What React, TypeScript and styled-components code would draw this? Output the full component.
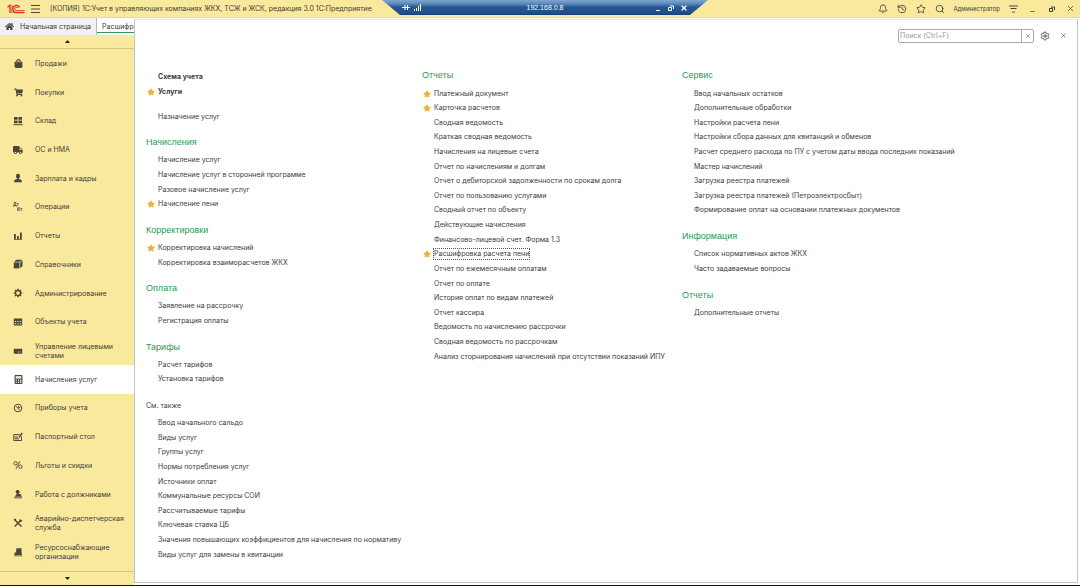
import React from 'react';
import styled, { createGlobalStyle } from 'styled-components';
import { FaShoppingBag, FaShoppingCart, FaTruck, FaHome, FaCalculator, FaStar } from 'react-icons/fa';
import { Bell, History, Star, Search, X, Settings } from 'lucide-react';

const Global = createGlobalStyle`
  * { box-sizing: border-box; }
  html, body, #root { height: 100%; }
  body { margin: 0; background: #fff; color: #3d3d3d; font: 7px/10px Inter, "Liberation Sans", Arial, sans-serif; }
  button, input { font: inherit; color: inherit; }
  button { padding: 0; border: 0; background: none; }
  ul, h2, p { margin: 0; padding: 0; list-style: none; }
  a { color: inherit; text-decoration: none; }
`;

const Shell = styled.div`
  display: flex;
  flex-direction: column;
  min-height: 100vh;
  border-bottom: 1px solid #111;
`;

const TitleBar = styled.header`
  position: relative;
  display: flex;
  align-items: center;
  gap: 6px;
  height: 18px;
  padding: 0 4px 0 7px;
  background: #f9e99c;
  border-bottom: 1px solid #e5d88f;
`;

const AppName = styled.span`
  margin-left: 4px;
  white-space: nowrap;
`;

const BarTools = styled.div`
  display: flex;
  align-items: center;
  gap: 8px;
  margin-left: auto;
  svg { display: block; }
`;

const BarButton = styled.button<{ $small?: boolean }>`
  display: flex;
  align-items: center;
  justify-content: center;
  min-width: 11px;
  height: 12px;
  font-size: ${(p) => (p.$small ? '6px' : '7px')};
`;

const WindowButtons = styled.div`
  display: flex;
  gap: 8px;
`;

const Remote = styled.div`
  position: absolute;
  top: 0;
  left: 50%;
  display: grid;
  grid-template-columns: 1fr auto 1fr;
  align-items: center;
  width: 326px;
  height: 15px;
  padding: 0 20px;
  transform: translateX(-50%);
  margin-left: 5px;
  color: #fff;
  background: linear-gradient(#7fa6cd 0, #5a8abb 25%, #24568f 48%, #215089 85%, #17406f 100%);
  clip-path: polygon(0 0, 100% 0, 308px 100%, 18px 100%);
`;

const Address = styled.span`
  font-family: "Liberation Sans", Arial, sans-serif;
`;

const RemoteGroup = styled.div<{ $end?: boolean }>`
  display: flex;
  align-items: center;
  gap: ${(p) => (p.$end ? '6px' : '4px')};
  justify-content: ${(p) => (p.$end ? 'flex-end' : 'flex-start')};
`;

const Main = styled.div`
  display: grid;
  flex: 1;
  grid-template-columns: 134px 1fr;
`;

const Left = styled.div`
  display: flex;
  flex-direction: column;
  min-width: 0;
`;

const Tabs = styled.nav`
  display: flex;
  height: 17px;
  overflow: hidden;
  background: #fff;
`;

const Tab = styled.button<{ $active?: boolean }>`
  display: flex;
  flex: none;
  align-items: center;
  gap: 6px;
  padding: 0 5px;
  white-space: nowrap;
  background: ${(p) => (p.$active ? '#fff' : '#f1f1f1')};
  border-right: 1px solid #b9b9b9;
  box-shadow: ${(p) => (p.$active ? 'inset 0 -2px #fff, inset 0 -3px #2c9c5a' : 'none')};
`;

const Sidebar = styled.nav`
  display: flex;
  flex: 1;
  flex-direction: column;
  background: #f9e99c;
`;

const Scroll = styled.button<{ $bottom?: boolean }>`
  display: flex;
  align-items: center;
  justify-content: center;
  height: 14px;
  border-top: ${(p) => (p.$bottom ? '1px solid #d4c784' : '0')};
  border-bottom: ${(p) => (p.$bottom ? '0' : '1px solid #d4c784')};
`;

const Menu = styled.ul`
  display: flex;
  flex: 1;
  flex-direction: column;
  padding-bottom: 5px;
`;

const MenuItem = styled.li`
  display: flex;
  flex: 1;
`;

const MenuLink = styled.a<{ $active?: boolean }>`
  display: grid;
  flex: 1;
  grid-template-columns: 12px 1fr;
  gap: 11px;
  align-items: center;
  padding: 0 8px 0 12px;
  line-height: 9px;
  background: ${(p) => (p.$active ? '#fff' : 'transparent')};
  svg { display: block; justify-self: center; color: #4b463a; }
`;

const Panel = styled.main`
  display: flex;
  flex-direction: column;
  margin: 1px 2px 2px 0;
  border: 1px solid #c4c4c4;
  border-top-color: #e6e6e6;
`;

const PanelTools = styled.form`
  display: flex;
  align-items: center;
  justify-content: flex-end;
  height: 37px;
  padding: 0 7px 6px 0;
`;

const SearchBox = styled.div`
  display: flex;
  width: 136px;
  height: 14px;
  margin-right: 4px;
  border: 1px solid #a9a9a9;
  border-radius: 2px;
`;

const SearchInput = styled.input`
  flex: 1;
  min-width: 0;
  padding: 0 1px;
  border: 0;
  outline: 0;
  background: none;
  &::placeholder { color: #999; opacity: 1; }
`;

const ClearButton = styled.button`
  display: flex;
  align-items: center;
  justify-content: center;
  width: 12px;
  border-left: 1px solid #a9a9a9;
`;

const ToolButton = styled.button`
  display: flex;
  align-items: center;
  justify-content: center;
  width: 14px;
  height: 14px;
  & + & { margin-left: 4px; }
`;

const Columns = styled.div`
  display: grid;
  flex: 1;
  grid-template-columns: minmax(0, 276fr) minmax(0, 260fr) minmax(0, 395fr);
  padding-left: 11px;
`;

const Column = styled.div<{ $tail: number }>`
  display: flex;
  flex-direction: column;
  padding-bottom: ${(p) => p.$tail}px;
`;

const Intro = styled.ul`
  padding-top: 12px;
`;

const Rows = styled.div<{ $count: number }>`
  display: grid;
  flex: 1;
  grid-template-rows: repeat(${(p) => p.$count}, minmax(12px, 1fr));
`;

const Section = styled.section<{ $span: number }>`
  display: grid;
  grid-row: span ${(p) => p.$span};
  grid-template-rows: subgrid;
`;

const Heading = styled.h2<{ $plain?: boolean }>`
  grid-row: span 2;
  align-self: end;
  padding-bottom: ${(p) => (p.$plain ? '4px' : '5px')};
  color: ${(p) => (p.$plain ? '#3d3d3d' : '#1f9a53')};
  font-family: ${(p) => (p.$plain ? 'inherit' : '"Liberation Sans", Arial, sans-serif')};
  font-size: ${(p) => (p.$plain ? '7px' : '9px')};
  font-weight: 400;
  line-height: 12px;
`;

const Links = styled.ul<{ $span: number }>`
  display: grid;
  grid-row: span ${(p) => p.$span};
  grid-template-rows: subgrid;
`;

const Entry = styled.li<{ $bold?: boolean; $apart?: boolean }>`
  display: grid;
  grid-template-columns: 12px 1fr;
  align-items: center;
  min-height: ${(p) => (p.$bold || p.$apart ? '15px' : '0')};
  margin-top: ${(p) => (p.$apart ? '10px' : '0')};
  font-weight: ${(p) => (p.$bold ? 700 : 400)};
  white-space: nowrap;
`;

const EntryLink = styled.a<{ $focused?: boolean }>`
  grid-column: 2;
  grid-row: 1;
  justify-self: start;
  outline: ${(p) => (p.$focused ? '1px dotted #555' : 'none')};
`;

const Mark = styled(FaStar)`
  grid-row: 1;
  margin-left: 1px;
  color: #efb13c;
`;

const Logo = () => (
  <svg width="18" height="10" viewBox="0 0 18 10" fill="none" stroke="#d8322a" strokeWidth="1.3">
    <path d="M0.5 3.2 L3 1.2 V9" />
    <path d="M5 1.2 V9" strokeWidth="0.9" />
    <path d="M12.6 3.4 A3.6 3.6 0 1 0 9.6 8.7 H17.5" />
    <path d="M11 4 A1.8 1.8 0 1 0 9.6 6.7 H17.5" strokeWidth="1" />
  </svg>
);

const Burger = () => (
  <svg width="9" height="8" viewBox="0 0 9 8" stroke="#4b463a">
    <path d="M0 .5H9M0 4H9M0 7.500H9" />
  </svg>
);

const draw = (children: React.ReactNode) => (
  <svg width="10" height="10" viewBox="0 0 10 10" fill="currentColor">{children}</svg>
);
const line = { fill: 'none', stroke: 'currentColor' };

const icons: Record<string, React.ReactNode> = {
  bag: <FaShoppingBag size={9} />,
  cart: <FaShoppingCart size={9} />,
  store: draw(<path d="M1 1h3.600v2.800H1zM5.400 1H9v2.800H5.400zM1 4.500h3.600v2.800H1zM5.400 4.500H9v2.800H5.400zM.4 8.200h9.200v1H.4z" />),
  truck: <FaTruck size={10} />,
  person: draw(<path d="M5 .8a2 2 0 0 1 2 2.100C7 4.200 6.300 5.200 5.800 5.500v.6c1.600.3 3.200.9 3.200 3.100H1c0-2.200 1.600-2.800 3.200-3.100v-.6C3.700 5.200 3 4.200 3 2.900A2 2 0 0 1 5 .8z" />),
  dtkt: (
    <svg width="10" height="10" viewBox="0 0 10 10" fill="currentColor" fontFamily="Liberation Sans" fontWeight="700" fontSize="5">
      <text x="0" y="4">Дт</text>
      <text x="4" y="9">Кт</text>
    </svg>
  ),
  bars: draw(<path d="M1 3h1.800v5H1zM4 5h1.800v3H4zM7 1.500h1.800V8H7zM1 8.300h8v.8H1z" />),
  books: draw(<><path d="M.8 3.400h5.700v6H.8z" /><path d="M1.200 2.800 3.200.8H9.400L7 2.800zM7.200 3.400 9.500 1.300V7L7.200 9.200z" /></>),
  gear: draw(<><circle cx="5" cy="5" r="2.500" {...line} strokeWidth="1.300" /><path {...line} strokeWidth="1.500" d="M5 .8v1.500M5 7.700v1.500M.8 5h1.500M7.700 5h1.500M2 2l1 1M7 7l1 1M8 2 7 3M3 7 2 8" /></>),
  grid: draw(<path fillRule="evenodd" d="M.8 1.500h8.400v7H.8zM1.800 4h1.400v1H1.800zM4.300 4h1.400v1H4.300zM6.800 4h1.400v1H6.800zM1.800 6.200h1.400v1H1.800zM4.300 6.200h1.400v1H4.300zM6.800 6.200h1.400v1H6.800z" />),
  card: draw(<path fillRule="evenodd" d="M.8 2.800h8.400v4.900H.8zM5 5.500h.8v1H5zM6.600 5.500h.8v1h-.8z" />),
  calc: <FaCalculator size={9} />,
  meter: draw(<><circle cx="5" cy="5" r="3.800" {...line} /><path {...line} d="M3 3.200 6.500 7M5.500 3v1.600h1.600" /></>),
  passport: draw(<><path {...line} d="M.8 2.600h6M8.500 4.500v4H.8V2.600M2 5h3M2 6.800h4" /><path {...line} strokeWidth="1.300" d="M9.300 1 6 5.500" /></>),
  percent: draw(<><circle cx="2.600" cy="3.300" r="1.700" {...line} strokeWidth=".9" /><circle cx="7.400" cy="6.700" r="1.700" {...line} strokeWidth=".9" /><path {...line} strokeWidth=".9" d="M7 1.200 3 8.800" /></>),
  debtor: draw(<><path d="M3.500 1h2l1.500 2-1.500 2h2L9 7.800H1.500L3.800 5 2.500 3z" /><path d="M1 8.400h8v.9H1z" /></>),
  tools: draw(<><path {...line} strokeWidth="1.400" d="M1.500 1.500 8.500 8.500M8.300 1.700 1.700 8.500" /><path d="M6.600 1 8 2.300 9.400 1.900 8.300 4 6.500 3.800zM1 .8h2l-.4 1.800H.8z" /></>),
  plant: draw(<path d="M3.500 1.300h5v3.600L9 8H1.500V6L3 5zM1 8.400h8.300v.9H1z" />),
};

const menu: [string, string][] = [
  ['bag', 'Продажи'],
  ['cart', 'Покупки'],
  ['store', 'Склад'],
  ['truck', 'ОС и НМА'],
  ['person', 'Зарплата и кадры'],
  ['dtkt', 'Операции'],
  ['bars', 'Отчеты'],
  ['books', 'Справочники'],
  ['gear', 'Администрирование'],
  ['grid', 'Объекты учета'],
  ['card', 'Управление лицевыми счетами'],
  ['calc', 'Начисления услуг'],
  ['meter', 'Приборы учета'],
  ['passport', 'Паспортный стол'],
  ['percent', 'Льготы и скидки'],
  ['debtor', 'Работа с должниками'],
  ['tools', 'Аварийно-диспетчерская служба'],
  ['plant', 'Ресурсоснабжающие организации'],
];

type Group = { title: string; plain?: boolean; items: string[] };

// A leading asterisk marks a favourite command.
const first: Group[] = [
  { title: 'Начисления', items: ['Начисление услуг', 'Начисление услуг в сторонней программе', 'Разовое начисление услуг', '*Начисление пени'] },
  { title: 'Корректировки', items: ['*Корректировка начислений', 'Корректировка взаиморасчетов ЖКХ'] },
  { title: 'Оплата', items: ['Заявление на рассрочку', 'Регистрация оплаты'] },
  { title: 'Тарифы', items: ['Расчет тарифов', 'Установка тарифов'] },
  {
    title: 'См. также',
    plain: true,
    items: ['Ввод начального сальдо', 'Виды услуг', 'Группы услуг', 'Нормы потребления услуг', 'Источники оплат', 'Коммунальные ресурсы СОИ', 'Рассчитываемые тарифы', 'Ключевая ставка ЦБ', 'Значения повышающих коэффициентов для начисления по нормативу', 'Виды услуг для замены в квитанции'],
  },
];

const second: Group[] = [
  {
    title: 'Отчеты',
    items: ['*Платежный документ', '*Карточка расчетов', 'Сводная ведомость', 'Краткая сводная ведомость', 'Начисления на лицевые счета', 'Отчет по начислениям и долгам', 'Отчет о дебиторской задолженности по срокам долга', 'Отчет по пользованию услугами', 'Сводный отчет по объекту', 'Действующие начисления', 'Финансово-лицевой счет. Форма 1.3', '*Расшифровка расчета пени', 'Отчет по ежемесячным оплатам', 'Отчет по оплате', 'История оплат по видам платежей', 'Отчет кассира', 'Ведомость по начислению рассрочки', 'Сводная ведомость по рассрочкам', 'Анализ сторнирования начислений при отсутствии показаний ИПУ'],
  },
];

const third: Group[] = [
  {
    title: 'Сервис',
    items: ['Ввод начальных остатков', 'Дополнительные обработки', 'Настройки расчета пени', 'Настройки сбора данных для квитанций и обменов', 'Расчет среднего расхода по ПУ с учетом даты ввода последних показаний', 'Мастер начислений', 'Загрузка реестра платежей', 'Загрузка реестра платежей (Петроэлектросбыт)', 'Формирование оплат на основании платежных документов'],
  },
  { title: 'Информация', items: ['Список нормативных актов ЖКХ', 'Часто задаваемые вопросы'] },
  { title: 'Отчеты', items: ['Дополнительные отчеты'] },
];

const Command = ({ name, bold, apart }: { name: string; bold?: boolean; apart?: boolean }) => {
  const starred = name.startsWith('*');
  const label = starred ? name.slice(1) : name;
  return (
    <Entry $bold={bold} $apart={apart}>
      {starred && <Mark size={8} />}
      <EntryLink href="#" $focused={label === 'Расшифровка расчета пени'}>{label}</EntryLink>
    </Entry>
  );
};

const Groups = ({ groups, count }: { groups: Group[]; count: number }) => (
  <Rows $count={count}>
    {groups.map((g) => (
      <Section key={g.title} $span={g.items.length + 2}>
        <Heading $plain={g.plain}>{g.title}</Heading>
        <Links $span={g.items.length}>
          {g.items.map((i) => <Command key={i} name={i} />)}
        </Links>
      </Section>
    ))}
  </Rows>
);

const Arrow = ({ down }: { down?: boolean }) => (
  <svg width="5" height="3" viewBox="0 0 5 3" fill="#222"><path d={down ? 'M0 0H5L2.500 3z' : 'M0 3H5L2.500 0z'} /></svg>
);

const Restore = () => (
  <svg width="6" height="6" viewBox="0 0 6 6" fill="none" stroke="currentColor"><path d="M.5 2.500h3v3h-3zM2 1h3.500v3" /></svg>
);

export default function App() {
  return (
    <Shell>
      <Global />
      <TitleBar>
        <Logo />
        <Burger />
        <AppName>[КОПИЯ] 1С:Учет в управляющих компаниях ЖКХ, ТСЖ и ЖСК, редакция 3.0 1С:Предприятие</AppName>
        <BarTools>
          <BarButton aria-label="Уведомления"><Bell size={10} strokeWidth={2} /></BarButton>
          <BarButton aria-label="История"><History size={10} strokeWidth={2} /></BarButton>
          <BarButton aria-label="Избранное"><Star size={10} strokeWidth={2} /></BarButton>
          <BarButton aria-label="Поиск"><Search size={10} strokeWidth={2} /></BarButton>
          <BarButton $small>Администратор</BarButton>
          <BarButton aria-label="Настройки">
            <svg width="9" height="8" viewBox="0 0 9 8" stroke="#4b463a"><path d="M0 1H9M1.500 3.500h6M3 6.500 4.500 7.500 6 6.500" fill="none" /></svg>
          </BarButton>
          <WindowButtons>
            <BarButton aria-label="Свернуть"><svg width="5" height="6" stroke="#777"><path d="M0 5.500H5" /></svg></BarButton>
            <BarButton aria-label="Развернуть"><Restore /></BarButton>
            <BarButton aria-label="Закрыть"><X size={9} /></BarButton>
          </WindowButtons>
        </BarTools>
        <Remote>
          <RemoteGroup>
            <svg width="8" height="7" viewBox="0 0 8 7" stroke="#fff"><path d="M0 3.500H8M3 1v5M5.500 1v5" /></svg>
            <svg width="8" height="7" viewBox="0 0 8 7" fill="#fff"><path d="M0 5h1v2H0zM2 4h1v3H2zM4 2h1v5H4zM6 0h1v7H6z" /></svg>
          </RemoteGroup>
          <Address>192.168.0.8</Address>
          <RemoteGroup $end>
            <svg width="7" height="7" stroke="#fff"><path d="M1 6.500H5" /></svg>
            <Restore />
            <X size={8} strokeWidth={4} />
          </RemoteGroup>
        </Remote>
      </TitleBar>
      <Main>
        <Left>
          <Tabs>
            <Tab><FaHome size={9} color="#444" />Начальная страница</Tab>
            <Tab $active>Расшифровка расчета пени</Tab>
          </Tabs>
          <Sidebar>
            <Scroll aria-label="Вверх"><Arrow /></Scroll>
            <Menu>
              {menu.map(([icon, label]) => (
                <MenuItem key={label}>
                  <MenuLink href="#" $active={icon === 'calc'}>{icons[icon]}<span>{label}</span></MenuLink>
                </MenuItem>
              ))}
            </Menu>
            <Scroll $bottom aria-label="Вниз"><Arrow down /></Scroll>
          </Sidebar>
        </Left>
        <Panel>
          <PanelTools>
            <SearchBox>
              <SearchInput aria-label="Поиск" placeholder="Поиск (Ctrl+F)" />
              <ClearButton type="button" aria-label="Очистить"><X size={6} /></ClearButton>
            </SearchBox>
            <ToolButton type="button" aria-label="Настройка"><Settings size={10} strokeWidth={2} /></ToolButton>
            <ToolButton type="button" aria-label="Закрыть"><X size={7} /></ToolButton>
          </PanelTools>
          <Columns>
            <Column $tail={20}>
              <Intro>
                <Command name="Схема учета" bold />
                <Command name="*Услуги" bold />
                <Command name="Назначение услуг" apart />
              </Intro>
              <Groups groups={first} count={30} />
            </Column>
            <Column $tail={28}><Groups groups={second} count={34} /></Column>
            <Column $tail={28}><Groups groups={third} count={34} /></Column>
          </Columns>
        </Panel>
      </Main>
    </Shell>
  );
}
